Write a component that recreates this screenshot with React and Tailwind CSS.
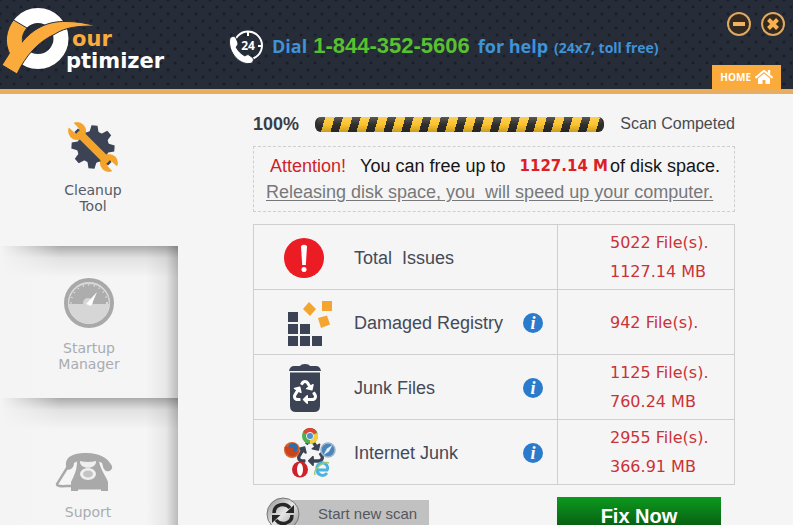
import React from 'react';
import { FaHome, FaRecycle } from 'react-icons/fa';

function Logo() {
  return (
    <a href="#home" aria-label="Your Optimizer" className="flex w-[228px] shrink-0">
      <svg viewBox="0 0 66 76" className="h-[76px] w-[66px] overflow-visible">
        <circle cx="38" cy="38.5" r="23" fill="none" stroke="#fff" strokeWidth="15" />
        <path d="M13.5 20 L27 28 C22 34 21 40 24 46 L14 60 C4 48 4 33 13.5 20Z" fill="#fbab3c" stroke="#262c38" strokeWidth="1" />
        <path
          d="M2 65 L11.5 50 C13 47 14 42 21 43.5 C33 28 48 21 66 21.5 C77 21.5 86 23 96 26 C78 26 66 27 55 34 C38 42 26 55 17 74Z"
          fill="#fbab3c"
          stroke="#262c38"
          strokeWidth="1"
        />
        <path d="M9 42 L21 40 L23 46 L18 58 L10 56Z" fill="#fbab3c" />
      </svg>
      <span className="flex flex-col pt-7 font-['DejaVu_Sans',sans-serif] text-[21px] leading-[22px] font-bold">
        <span className="pl-1.5 text-[#fbab3c]">our</span>
        <span className="text-white">ptimizer</span>
      </span>
    </a>
  );
}

function SupportBadge() {
  return (
    <svg viewBox="0 0 36 36" className="h-9 w-9 shrink-0">
      <circle cx="20" cy="16.5" r="14" fill="none" stroke="#fff" strokeWidth="2" />
      <path d="M20 3v4M34 17h-4M20 31v-3" stroke="#fff" strokeWidth="2" />
      <path
        d="M2 9 C4 7 7 7 8 9 L10 14 C10 16 9 17 8 18 C10 22 13 25 17 27 C18 26 20 25 21 26 L25 29 C26 31 25 34 22 34.5 C10 36 -1 21 2 9Z"
        fill="#fff"
        stroke="#262c38"
        strokeWidth="1"
      />
      <text x="20" y="21" textAnchor="middle" fill="#fff" fontSize="12" fontWeight="700" fontFamily="Open Sans, sans-serif">
        24
      </text>
    </svg>
  );
}

function Header() {
  return (
    <header className="flex h-[94px] shrink-0 justify-between border-b-[5px] border-[#e9ad5f] bg-[#262c38] bg-[radial-gradient(circle,#1a1f29_1px,transparent_2px),radial-gradient(circle,#1a1f29_1px,transparent_2px)] bg-[length:14px_14px] bg-[position:0_0,7px_7px]">
      <Logo />
      <div className="flex flex-1 items-center pt-1 font-['Open_Sans',sans-serif] font-bold whitespace-nowrap text-[#3f93d8]">
        <SupportBadge />
        <p className="flex items-baseline pl-2 text-lg">
          Dial
          <a href="tel:1-844-352-5606" className="pr-2 pl-1.5 font-['Liberation_Sans',sans-serif] text-[22px] text-[#57c12e]">
            1-844-352-5606
          </a>
          for help
          <span className="pl-1.5 text-sm">(24x7, toll free)</span>
        </p>
      </div>
      <div className="flex flex-col items-end justify-between pt-3 pr-2">
        <div className="flex gap-2.5">
          <button aria-label="Minimize" className="h-6 w-6">
            <svg viewBox="0 0 24 24">
              <circle cx="12" cy="12" r="11" fill="#33291f" stroke="#dfa863" strokeWidth="2" />
              <path d="M6 12h12" stroke="#f0b162" strokeWidth="4" />
            </svg>
          </button>
          <button aria-label="Close" className="h-6 w-6">
            <svg viewBox="0 0 24 24">
              <circle cx="12" cy="12" r="11" fill="#33291f" stroke="#dfa863" strokeWidth="2" />
              <path d="M7.5 7.5l9 9M16.5 7.5l-9 9" stroke="#fbb24e" strokeWidth="4" />
            </svg>
          </button>
        </div>
        <a
          href="#home"
          className="mr-1 flex h-6 items-center gap-1 bg-[#fbab3c] px-2 font-['Open_Sans',sans-serif] text-[10px] font-bold text-white"
        >
          HOME
          <FaHome className="h-[18px] w-[18px]" />
        </a>
      </div>
    </header>
  );
}

function CleanupIcon() {
  const teeth = [0, 45, 90, 135, 180, 225, 270, 315];
  return (
    <svg viewBox="0 0 50 50" className="h-[50px] w-[50px]">
      <g fill="#3c4354">
        <circle cx="25" cy="25" r="16" />
        {teeth.map((angle) => (
          <path key={angle} d="M20 12 L22 3.5 H28 L30 12Z" transform={`rotate(${angle + 4} 25 25)`} />
        ))}
      </g>
      <g transform="rotate(-45 25 25)">
        <path d="M25 6V44" stroke="#f5a42b" strokeWidth="8" />
        <circle cx="25" cy="2.5" r="9" fill="#f5a42b" />
        <circle cx="25" cy="47.5" r="9" fill="#f5a42b" />
        <path d="M21.5 -8 H28.5 L28 2 L25 4 L22 2Z" fill="#f5f5f5" />
        <path d="M21.5 58 H28.5 L28 48 L25 46 L22 48Z" fill="#f5f5f5" />
        <path d="M22.5 2.5H27.5M22.5 47.5H27.5" stroke="#3c4354" strokeWidth="2.5" />
      </g>
    </svg>
  );
}

function GaugeIcon() {
  return (
    <svg viewBox="0 0 50 50" className="h-[50px] w-[50px]">
      <circle cx="25" cy="25" r="23" fill="#d6d6d6" stroke="#a9a9a9" strokeWidth="4" />
      <path d="M5 26 A20 20 0 0 1 45 26Z" fill="#adadad" />
      <circle cx="25" cy="25" r="18" fill="none" stroke="#dcdcdc" strokeWidth="2" strokeDasharray="1 4.6" pathLength="113" />
      <path d="M6 26 H44 A19 19 0 0 1 6 26Z" fill="#d6d6d6" />
      <circle cx="25" cy="25" r="20.5" fill="none" stroke="#d9d9d9" strokeWidth="1" />
      <circle cx="24" cy="25" r="5" fill="#d6d6d6" />
      <path d="M22 26 L33 14 L27 28Z" fill="#fff" />
    </svg>
  );
}

function TelephoneIcon() {
  return (
    <svg viewBox="0 0 58 40" className="h-10 w-[58px]">
      <path
        d="M11 14 C10 3 21 1 32 1 C44 1 53 6 57 14 C58 18 54 20 51 19 C48 17 48 14 47 11 L44 9.5 C46 19 51 24 53 30 V39 H46 V37.5 H23 V39 H16 V30 C19 24 22 18 22 9.5 L19 11 C19 16 15 19 11 17Z"
        fill="#a9a9a9"
      />
      <path d="M12 16 L2 32 C2 35 8 34 17 34" fill="none" stroke="#a9a9a9" strokeWidth="2.5" />
      <path d="M25 9 Q33 11 41 9 C42 18 24 18 25 9Z" fill="#efefef" />
      <ellipse cx="33" cy="22" rx="8" ry="6" fill="#f0f0f0" />
      <ellipse cx="33" cy="22" rx="5" ry="3.5" fill="#c4c4c4" />
    </svg>
  );
}

function Sidebar() {
  const shaded =
    'flex h-[152px] w-full shrink-0 flex-col items-center text-[#a9acb0] bg-[linear-gradient(to_right,#f4f4f4,transparent_60px),linear-gradient(to_bottom,rgba(0,0,0,.3),rgba(0,0,0,.08)_12px,transparent_32px),linear-gradient(to_left,rgba(0,0,0,.24),rgba(0,0,0,.06)_12px,transparent_32px)]';

  return (
    <nav className="flex w-[178px] shrink-0 flex-col font-['DejaVu_Sans',sans-serif] text-sm leading-4">
      <button className="flex h-[152px] shrink-0 flex-col items-center gap-2.5 pt-7 pl-2 text-[#555b66]">
        <CleanupIcon />
        <span>
          Cleanup
          <br />
          Tool
        </span>
      </button>
      <button className={`${shaded} gap-3 pt-8`}>
        <GaugeIcon />
        <span>
          Startup
          <br />
          Manager
        </span>
      </button>
      <button className={`${shaded} gap-3 pt-[54px] pr-2.5`}>
        <TelephoneIcon />
        <span className="pl-2">Suport</span>
      </button>
    </nav>
  );
}

function IssuesIcon() {
  return (
    <svg viewBox="0 0 40 40" className="h-10 w-10">
      <circle cx="20" cy="20" r="20" fill="#ec1c24" />
      <path d="M17 8 Q20 5.5 23 8 L21.8 27 H18.2Z" fill="#fff" />
      <circle cx="20" cy="31.5" r="2.5" fill="#fff" />
    </svg>
  );
}

function RegistryIcon() {
  return (
    <svg viewBox="-3 0 50 46" className="h-[46px] w-[50px]">
      <path d="M1 12h10v10H1zM1 24h10v10H1zM13 24h10v10H13zM1 36h10v10H1zM13 36h10v10H13zM25 36h10v10H25z" fill="#3c4354" />
      <g fill="#f3a52f">
        <path d="M22 2 L29 9 L23 16 L16 9Z" />
        <path d="M35 1h10v10H35z" />
        <path d="M31 18 L40 15.5 L43 24.5 L34 28Z" />
      </g>
    </svg>
  );
}

function BinIcon() {
  return (
    <svg viewBox="-5 0 37 48" className="h-12 w-[37px]">
      <path d="M0 7 Q1 2 5 2 H11 Q12 0 16 0 Q20 0 21 2 H27 Q31 2 32 7Z" fill="#3c4354" />
      <path d="M1 8.5 H31 V42 Q31 48 25 48 H7 Q1 48 1 42Z" fill="#3c4354" />
      <FaRecycle x="4" y="16" size={24} color="#fff" />
    </svg>
  );
}

function BrowsersIcon() {
  return (
    <svg viewBox="0 0 52 50" className="h-[50px] w-[52px]">
      <FaRecycle x="13" y="11" size={27} color="#3c4354" />
      {/* chrome */}
      <circle cx="26" cy="8" r="8" fill="#4caf50" />
      <path d="M26 8 L19 4 A8 8 0 0 1 33 4Z" fill="#df4535" />
      <path d="M26 8 L33.5 5 A8 8 0 0 1 26 16Z" fill="#f7cd3a" />
      <circle cx="26" cy="8" r="3.6" fill="#4f8ed0" stroke="#eee" strokeWidth="1" />
      {/* firefox */}
      <circle cx="8" cy="22" r="8" fill="#d9622a" />
      <circle cx="9" cy="20" r="5" fill="#2f6ca8" />
      <path d="M0.5 19 C4 17 5 20 9 20 C8 24 12 25 15 22 C14 30 2 32 0.5 19Z" fill="#c8441f" />
      {/* safari */}
      <circle cx="44" cy="22" r="7" fill="#4a86bd" stroke="#9fb4c6" strokeWidth="1.5" />
      <path d="M48.5 17 L45 23.5 L39.5 27 L43 20.5Z" fill="#e5eef6" />
      {/* opera */}
      <circle cx="16" cy="41.5" r="8" fill="#cf2129" />
      <ellipse cx="16" cy="41.5" rx="3" ry="6.5" fill="#fff" />
      {/* explorer */}
      <path d="M44 42 H33 A5.5 5.5 0 1 1 43.5 42 M43 45 A5.5 5.5 0 0 1 33 42" fill="none" stroke="#4bb3e0" strokeWidth="3" />
      <path d="M31 47 C29 41 39 33 45 35" fill="none" stroke="#9cc96c" strokeWidth="1.5" />
    </svg>
  );
}

const rows = [
  { name: 'Total  Issues', icon: <IssuesIcon />, values: ['5022 File(s).', '1127.14 MB'] },
  { name: 'Damaged Registry', icon: <RegistryIcon />, info: true, values: ['942 File(s).'] },
  { name: 'Junk Files', icon: <BinIcon />, info: true, values: ['1125 File(s).', '760.24 MB'] },
  { name: 'Internet Junk', icon: <BrowsersIcon />, info: true, values: ['2955 File(s).', '366.91 MB'] },
];

function ResultsTable() {
  return (
    <table className="mt-3 w-full border-collapse border border-[#cfcfcf]">
      <tbody>
        {rows.map((row) => (
          <tr key={row.name} className="h-[65px] border-b border-[#cfcfcf]">
            <th scope="row" className="p-0 text-left font-normal">
              <div className="flex items-center pt-0.5 pr-3.5">
                <span className="flex w-[100px] shrink-0 pl-[30px]">{row.icon}</span>
                <span className="flex-1 text-lg whitespace-pre text-[#444a57]">{row.name}</span>
                {row.info && (
                  <button
                    aria-label={`About ${row.name}`}
                    className="h-5 w-5 rounded-full bg-[#2a7bcb] font-['Liberation_Serif',serif] text-lg leading-5 font-bold text-white italic"
                  >
                    i
                  </button>
                )}
              </div>
            </th>
            <td className="w-[177px] border-l border-[#cfcfcf] p-0 pl-[52px] font-['DejaVu_Sans',sans-serif] text-base leading-[29px] whitespace-nowrap text-[#cb3238]">
              {row.values.map((value) => (
                <div key={value}>{value}</div>
              ))}
            </td>
          </tr>
        ))}
      </tbody>
    </table>
  );
}

function RescanIcon() {
  return (
    <svg viewBox="0 0 34 34" className="relative h-[34px] w-[34px] shrink-0">
      <defs>
        <linearGradient id="metal" x1="0" y1="0" x2="1" y2="1">
          <stop offset="0" stopColor="#8d8d8d" />
          <stop offset="0.5" stopColor="#e6e6e6" />
          <stop offset="1" stopColor="#8a8a8a" />
        </linearGradient>
      </defs>
      <circle cx="17" cy="17" r="16" fill="url(#metal)" stroke="#777" strokeWidth="1" />
      <path d="M8 16 C8 7 19 5 24 11" fill="none" stroke="#262626" strokeWidth="3.5" />
      <path d="M28 8 V16 H19.5Z" fill="#262626" />
      <path d="M26 18 C26 27 15 29 10 23" fill="none" stroke="#262626" strokeWidth="3.5" />
      <path d="M6 26 V18 H14.5Z" fill="#262626" />
    </svg>
  );
}

export default function App() {
  return (
    <div className="flex h-screen flex-col overflow-hidden bg-[#f5f5f5] font-['Liberation_Sans',Arial,sans-serif]">
      <Header />
      <div className="flex min-h-0 flex-1">
        <Sidebar />
        <main className="min-w-0 flex-1 pt-[18px] pr-[58px] pl-[75px]">
          <div className="flex h-6 items-center gap-4 text-base whitespace-nowrap text-[#4a4a4f]">
            <span id="scan-percent" className="text-lg font-bold text-[#3b3e46]">100%</span>
            <div
              role="progressbar"
              aria-labelledby="scan-percent"
              aria-valuenow={100}
              className="h-[15px] flex-1 rounded-md border-x-2 border-[#302f2b] bg-[linear-gradient(to_bottom,rgba(255,255,255,.2),transparent_50%,rgba(0,0,0,.2)),repeating-linear-gradient(106deg,#302f2b_0px,#302f2b_8px,#fcc32c_8px,#fcc32c_17px)]"
            />
            <span>Scan Competed</span>
          </div>

          <div className="mt-2.5 border border-dashed border-[#cfcfcf] px-3 py-1.5 text-lg leading-[26px] whitespace-nowrap">
            <p className="flex pl-1">
              <span className="text-[#cf1f2a]">Attention!</span>
              <span className="pl-3.5 text-[#151515]">You can free up to</span>
              <span className="pl-3.5 font-['DejaVu_Sans',sans-serif] text-[15px] leading-[26px] font-bold text-[#dc1f26]">
                1127.14 M
              </span>
              <span className="pl-0.5 text-[#151515]">of disk space.</span>
            </p>
            <p className="whitespace-pre text-[#77787a] underline underline-offset-2">
              Releasing disk space, you  will speed up your computer.
            </p>
          </div>

          <ResultsTable />

          <div className="flex items-start justify-between pt-3 pr-3.5 pl-[13px]">
            <button className="flex items-center text-[15px] leading-6 text-[#56575c]">
              <RescanIcon />
              <span className="-ml-4 bg-[#c1c1c1] py-0.5 pr-3 pl-[34px]">Start new scan</span>
            </button>
            <button className="h-[38px] w-[164px] bg-linear-to-b from-[#0c9a1e] to-[#06500f] text-xl font-bold text-white">
              Fix Now
            </button>
          </div>
        </main>
      </div>
    </div>
  );
}
